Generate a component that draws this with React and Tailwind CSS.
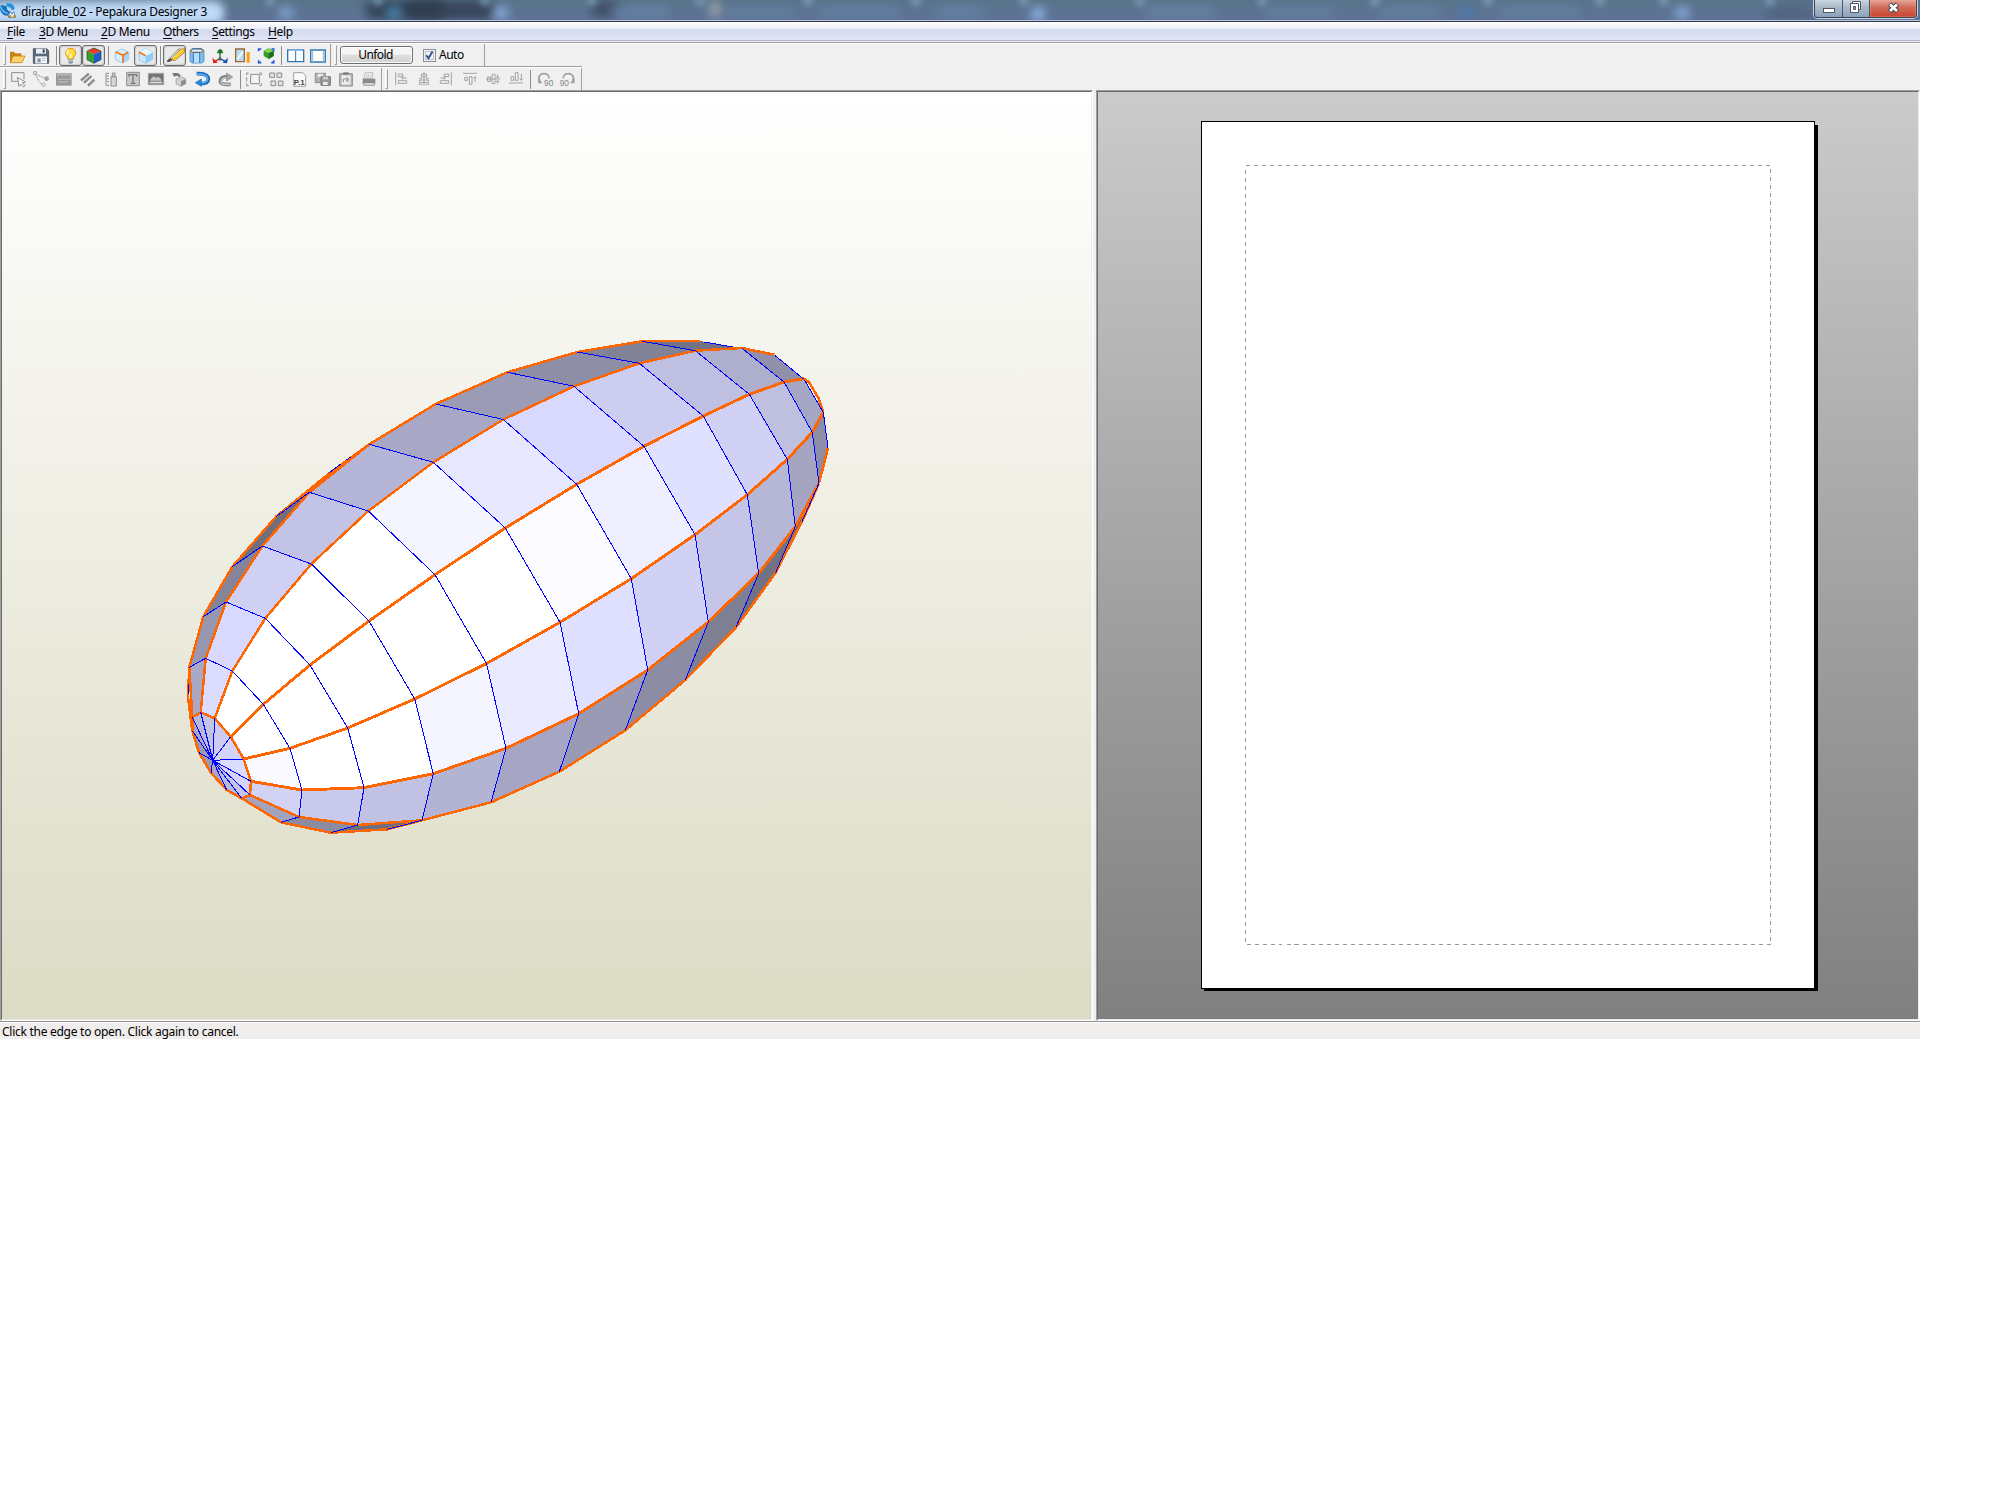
import React from "react";

const O = "#ff6600";
const B = "#0000ff";

/* Meridians of the model, listed from the near tip to the far end. */
const mA = [[192.3,717.3],[189.3,667.3],[203.3,616.7],[232.3,566.7],[276,516.7],[329.3,473.3],[369.3,444.3]];
const mB = [[200.7,712.3],[205.7,658.3],[226,602],[262.3,546],[309.3,492.3],[369.3,444.3],[435.7,404],[507.3,372.3],[577.3,352],[642.3,341.3],[700,341],[741.7,348]];
const mC = [[214.7,718.3],[232.3,671],[265.3,618.3],[311.3,564],[368.3,511],[433.3,462.3],[503.3,419.5],[574,386.3],[639.3,363.3],[695.3,350.7],[741.7,348],[774.3,354.7]];
const mD = [[230.7,736.7],[263.3,704.3],[310,665],[369,621],[435,574.7],[505.3,528],[576.7,484.3],[644,446.3],[703.3,416],[749.3,394.3],[784,382],[804,378.7]];
const mE = [[243.7,759],[290,748.3],[347.7,728],[414.7,699],[486.5,663.5],[560,622.3],[631.3,578.7],[695,534.7],[747.3,494.7],[787.3,459.3],[812.3,432.3],[823.3,412.3]];
const mF = [[251,781.3],[302,790],[364,787.7],[433.3,773.7],[506,748.3],[578.7,713.7],[647.7,670],[708.3,622],[758.7,573.3],[795.3,526.7],[819,483.3],[828,447.7]];
const mG = [[250,795],[299,817],[357.7,825],[422,820.3],[491,802.3],[559.3,771.7],[625.3,730.3],[685.3,680],[736,627.3],[775.3,573.3],[802,521.7],[819,483.3]];
const mH = [[241.7,798.3],[281,822.3],[330.7,832.7],[387.3,829.3],[422,820.3]];

/* Each strip: two meridians, the face fills, and how many cross edges are drawn. */
const strips = [
  [mA, mB, ["#a9a9c7","#9797b1","#84849b","#6f6f80","#6f6f80"], 4],
  [mB, mC, ["#dcdcff","#d9d9ff","#d0d0f5","#c3c3e6","#b5b5d7","#a8a8c6","#9b9bb6","#8e8ea7","#828297","#737388","#737388"], 9],
  [mC, mD, ["#fff","#fff","#fff","#fff","#f5f5ff","#e7e7ff","#d9d9ff","#cdcdf1","#bfbfe1","#aeaecd","#9090aa"], 10],
  [mD, mE, ["#fff","#fff","#fff","#fff","#fff","#fbfbff","#eeeeff","#e0e0ff","#d1d1f5","#bfbfe0","#a5a5c4"], 10],
  [mE, mF, ["#f9f9ff","#fff","#fff","#f5f5ff","#e9e9ff","#dfdfff","#d1d1f5","#c5c5e8","#b6b6d6","#a5a5c2","#8d8da6"], 11],
  [mF, mG, ["#d2d2f5","#c9c9ee","#c1c1e4","#b3b3d3","#a6a6c4","#9a9ab4","#8c8ca5","#7f7f94","#727285","#6c6c7c"], 10],
  [mG, mH, ["#a3a3c0","#8b8ba2","#6f6f80"], 3],
];

const tip = [212.7,760.3];
const ring = [mA[0],mB[0],mC[0],mD[0],mE[0],mF[0],mG[0],mH[0],[226.7,790],[211,772.7],[199,752.7],[192.3,730.7]];
const ringFill = ["#b8b8da","#c3c3e6","#ccccf0","#d4d4fa","#dcdcff","#d4d4fa","#c4c4e6","#b8b8d9","#a8a8c6","#9a9ab5","#9a9ab5","#a8a8c6"];

const P = (a) => a.map((p) => p.join(",")).join(" ");

function Model() {
  return (
    <svg width="700" height="540" viewBox="160 320 700 540" shapeRendering="crispEdges" className="ml-[158px] mt-[228px] block shrink-0">
      {strips.map(([a, b, fills], s) =>
        fills.map((f, i) => (a[i + 1] && b[i + 1] ? <polygon key={s + "-" + i} points={P([a[i], a[i + 1], b[i + 1], b[i]])} fill={f} /> : null)),
      )}
      {ring.map((p, i) => <polygon key={i} points={P([p, ring[(i + 1) % ring.length], tip])} fill={ringFill[i]} />)}
      <g fill="none" stroke={O} strokeWidth="2.5" strokeLinejoin="round">
        {[mA, mB.slice(0, 11), mC, mG, mH].map((m, i) => <polyline key={i} points={P(m)} />)}
        <polyline points={P([...ring, ring[0]])} />
        <polyline points="189.3,667 188,697 192.3,731" />
        <polyline points="804,378.7 809,382 819,399 823.3,412.3" />
        <polyline points="828,447.7 819,483.3" />
      </g>
      <g fill="none" stroke={O} strokeWidth="2.9" strokeLinejoin="round">
        {[mD, mE, mF.slice(0, 11)].map((m, i) => <polyline key={i} points={P(m)} />)}
      </g>
      <g fill="none" stroke={B} strokeWidth="1">
        {strips.map(([a, b, , n], s) =>
          a.slice(1, n + 1).map((p, i) => <polyline key={s + "-" + i} points={P([p, b[i + 1]])} />),
        )}
        {ring.map((p, i) => <polyline key={i} points={P([p, tip])} />)}
        <polyline points="329,473 341,464" />
        <polyline points="346,460 351,457" />
        <polyline points="704,342 733,347" />
        <polyline points="775.3,355.7 803.5,379" />
        <polyline points="804.5,380 823,412" />
        <polyline points="823.5,413 828,448" />
        <polyline points="188,684 188,694" />
      </g>
    </svg>
  );
}

/* One 23px toolbar cell; drawings use a canvas of three units per pixel. */
function Tool({ x, y = 132, on, children }) {
  return (
    <div className={"flex h-[21px] w-[23px] shrink-0 items-center justify-center " + (on ? "rounded-[3px] border border-[#6e6e6e] bg-[#e9e9e9] shadow-[inset_0_0_2px_#999]" : "")}>
      <svg width="23" height="21" viewBox={`${x} ${y} 69 63`} className="block shrink-0">{children}</svg>
    </div>
  );
}
const Sep = () => (
  <div className="flex h-[19px] w-[6px] shrink-0 justify-center"><div className="h-full w-px bg-[#8c8c8c]" /></div>
);
const Grip = () => <div className="h-[20px] w-[3px] shrink-0 border border-l-white border-t-white border-r-[#a0a0a0] border-b-[#a0a0a0] bg-[#f0f0f0]" />;

function RowOne() {
  return (
    <div className="flex h-[22px] w-[485px] items-center border-r border-[#a0a0a0]">
      <div className="ml-[3px] mr-px"><Grip /></div>
      <Tool x={21}>
        <path d="M30 184V152h12l4 5h18v27z" fill="#c98718" />
        <path d="M31 185l8-20h36l-9 20z" fill="#ffd36b" stroke="#b47612" strokeWidth="2" />
      </Tool>
      <Tool x={90}>
        <path d="M100 143h40l6 6v38h-46z" fill="#56687e" stroke="#2f3d4d" strokeWidth="2" />
        <path d="M108 143h30v15h-30z" fill="#e9eef5" /><path d="M128 145h6v10h-6z" fill="#33404f" />
        <path d="M106 166h35v21h-35z" fill="#f4f6fa" /><path d="M112 172h10v12h-10z" fill="#7f90a5" /><path d="M126 172h11M126 178h11" stroke="#9aa" strokeWidth="2" />
      </Tool>
      <Sep />
      <Tool x={177} on>
        <path d="M212 142c-9 0-15 6-15 14 0 7 6 10 7 18h16c1-8 7-11 7-18 0-8-6-14-15-14z" fill="#ffdc3c" stroke="#e0980c" strokeWidth="3" />
        <path d="M206 148c-4 2-5 7-3 12M212 158v14" stroke="#fffce0" strokeWidth="5" fill="none" />
        <path d="M205 175h14v9l-4 4h-6l-4-4z" fill="#8d99aa" /><path d="M205 179h14" stroke="#eee" strokeWidth="2" />
      </Tool>
      <Tool x={246} on>
        <path d="M282 141l21 9-21 10-21-10z" fill="#f03c1e" /><path d="M261 150l21 10v27l-21-11z" fill="#2fa32c" /><path d="M303 150l-21 10v27l21-11z" fill="#1d5bd0" />
        <path d="M261 150l21-9 21 9v26l-21 11-21-11z" fill="none" stroke="#20452c" strokeWidth="2" />
      </Tool>
      <Sep />
      <Tool x={333}>
        <path d="M366 144l20 9v23l-19 10-21-10v-23z" fill="#d9eefd" stroke="#79b9ea" strokeWidth="2" />
        <path d="M367 163l19-10v23l-19 10z" fill="#a3d3f7" />
        <path d="M347 153l22 10 15-9M369 163v22" fill="none" stroke="#ee7417" strokeWidth="5" />
      </Tool>
      <Tool x={402} on>
        <path d="M417 154l20-12 21 12v21l-21 12-20-11z" fill="#cbe8fc" stroke="#71b7ea" strokeWidth="2" />
        <path d="M437 164l21-10v21l-21 12z" fill="#8ecbf5" /><path d="M437 142l21 12-21 10-20-10z" fill="#e7f6ff" />
        <path d="M417 153l20 11" stroke="#f27a15" strokeWidth="5" />
      </Tool>
      <Sep />
      <Tool x={489} on>
        <path d="M501 180l34-36h8l-32 36z" fill="#d9d4c0" stroke="#77735f" strokeWidth="2" />
        <path d="M512 178l30-33 13-2-2 11-27 24z" fill="#fbc926" stroke="#8e6a16" strokeWidth="2" />
        <path d="M520 170l26-24" stroke="#ffe98a" strokeWidth="3" />
        <path d="M500 182l11-11 5 5-8 7z" fill="#4d4d48" />
      </Tool>
      <Tool x={558}>
        <path d="M570 149l6-6h29l7 6v32l-7 5h-29l-6-5z" fill="#80bff0" stroke="#2e75b8" strokeWidth="2" />
        <path d="M571 149l7-5h25l8 5-8 5h-25z" fill="#d9eefd" stroke="#3a4f63" strokeWidth="3" /><path d="M582 156h16v29h-16z" fill="#b8e0fb" /><path d="M599 155v30M580 155v30" stroke="#3a7ab8" strokeWidth="3" /><path d="M570 150l9 5M601 155l10-5" stroke="#f28b1c" strokeWidth="3" />
      </Tool>
      <Tool x={627}>
        <path d="M660 172v-20" stroke="#26702c" strokeWidth="4" /><path d="M650 157l5-9 5-5 6 5 4 9z" fill="#1b752b" />
        <path d="M660 173l-16 8" stroke="#e31d1d" strokeWidth="4" /><path d="M637 170l3 17 14-2z" fill="#e12020" />
        <path d="M660 173l16 8" stroke="#174db8" strokeWidth="4" /><path d="M684 170l-3 17-14-2z" fill="#1c51c0" /><circle cx="660" cy="174" r="5" fill="#58606b" />
      </Tool>
      <Tool x={696}>
        <path d="M707 144h26v38h-26z" fill="#b9dcf2" stroke="#9c6634" strokeWidth="4" /><path d="M711 176l18-24" stroke="#eaf8ff" strokeWidth="6" /><path d="M740 153h9v32h-9z" fill="#ff9d16" />
      </Tool>
      <Tool x={765}>
        <path d="M776 151v-7h8M814 144h7v7M776 178v7h8M814 185h7v-7" fill="none" stroke="#1255e4" strokeWidth="5" />
        <path d="M806 142l15 7v16l-15 9-15-9v-16z" fill="#359b2d" /><path d="M806 142l15 7-15 8-15-8z" fill="#84d253" /><path d="M806 157l15-8v16l-15 9z" fill="#1c6c23" />
      </Tool>
      <Sep />
      <Tool x={852}>
        <path d="M863 147h48v35h-48z" fill="#fdfdfd" stroke="#2e78b6" strokeWidth="4" /><path d="M887 147v35" stroke="#2e78b6" strokeWidth="3" /><path d="M866 148h43" stroke="#95bce0" strokeWidth="4" />
      </Tool>
      <Tool x={921}>
        <path d="M932 147h44v36h-44z" fill="#fffef9" stroke="#2e78b6" strokeWidth="4" /><path d="M937 149v33M971 149v33" stroke="#9ac1e4" strokeWidth="5" />
      </Tool>
      <div className="h-[22px] w-px bg-[#a0a0a0]" />
      <div className="ml-[3px]"><Grip /></div>
      <button className="ml-[3px] flex h-[18px] w-[73px] items-center justify-center rounded-[3px] border border-[#707070] bg-gradient-to-b from-[#f4f4f4] from-45% via-[#dfdfdf] via-50% to-[#d2d2d2] text-[12px] leading-none tracking-[-0.6px] shadow-[inset_0_0_0_1px_#fafafa]">
        <span className="-translate-x-px">Unfold</span>
      </button>
      <div className="ml-[10px] mr-[4px] flex size-[13px] items-center justify-center border border-[#8e8f8f] bg-[#f4f4f4] shadow-[inset_0_0_0_1px_#f4f4f4,inset_0_0_0_2px_#bcc0c8]">
        <svg width="11" height="11" viewBox="0 0 11 11"><path d="M2.3 5.2l2.2 3 4-6.8" fill="none" stroke="#3a4f92" strokeWidth="1.9" /></svg>
      </div>
      <span className="-ml-px text-[12px] leading-none tracking-[-0.5px]">Auto</span>
    </div>
  );
}

const G1 = "#8d8d8d";
const G2 = "#a2a2a2";

function RowTwo() {
  const y = 207;
  return (
    <div className="flex h-[22px] w-[582px] items-center border-r border-[#a0a0a0]">
      <div className="ml-[3px] mr-px"><Grip /></div>
      <Tool x={21} y={y}>
        <path d="M53 244H35v-26h37v20" fill="none" stroke={G1} strokeWidth="3" /><path d="M52 232l24 14-9 2 8 9-5 4-8-9-5 7z" fill="#f8f8f8" stroke={G1} strokeWidth="3" />
      </Tool>
      <Tool x={90} y={y}>
        <path d="M106 220l10 24 12 10M112 224l24 12" fill="none" stroke={G1} strokeWidth="3" strokeDasharray="4 2" /><circle cx="105" cy="219" r="5" fill="#ddd" stroke={G1} strokeWidth="2" /><circle cx="140" cy="236" r="7" fill={G2} /><circle cx="131" cy="254" r="5" fill="#eee" stroke={G1} strokeWidth="2" />
      </Tool>
      <Tool x={159} y={y}>
        <path d="M168 219h47v38h-47z" fill="#999" /><path d="M174 219v10M180 219v6M186 219v10M192 219v6M198 219v10M204 219v6M210 219v10" stroke="#ececec" strokeWidth="2" /><path d="M174 238h38M174 246h30" stroke="#b5b5b5" strokeWidth="4" />
      </Tool>
      <Tool x={228} y={y}>
        <path d="M243 241l23-20M252 248l22-20M264 257l19-18" stroke="#777" strokeWidth="7" /><path d="M244 238l20-17M254 245l18-17M266 254l15-14" stroke="#d0d0d0" strokeWidth="2" />
      </Tool>
      <Tool x={297} y={y}>
        <path d="M327 220h-9v36h9M320 228h7M320 236h7M320 245h7" fill="none" stroke={G1} strokeWidth="3" /><path d="M333 230h16v28h-16zM337 219h8v11h-8z" fill="#d6d6d6" stroke={G1} strokeWidth="3" />
      </Tool>
      <Tool x={366} y={y}>
        <path d="M380 217h38v40h-38z" fill="#c9c9c9" stroke={G1} strokeWidth="3" /><path d="M387 230v-6h23v6M399 225v25M392 250h14" stroke="#777" strokeWidth="4" fill="none" />
      </Tool>
      <Tool x={435} y={y}>
        <path d="M445 220h46v34h-46z" fill="#737373" stroke={G2} strokeWidth="3" /><path d="M449 245h38v5h-38z" fill="#ddd" /><path d="M450 242c7-14 12-15 18-8 6-6 12-3 17 8z" fill="#c3c3c3" />
      </Tool>
      <Tool x={504} y={y}>
        <path d="M517 219h17l8 7-4 6-7-5-9 3z" fill="#777" /><path d="M528 237l15-7 14 7v14l-14 8-15-8z" fill="#d0d0d0" stroke={G1} strokeWidth="2" /><path d="M543 244l14-7v14l-14 8z" fill={G1} />
      </Tool>
      <Tool x={573} y={y}>
        <path d="M590 221c24-1 35 5 35 16 0 10-9 14-22 14" fill="none" stroke="#1769bd" strokeWidth="11" /><path d="M590 222c23-1 33 5 33 15 0 8-9 12-21 12" fill="none" stroke="#5ab1f3" strokeWidth="5" /><path d="M604 237v22l-18-11z" fill="#2787dc" stroke="#1769bd" strokeWidth="2" />
      </Tool>
      <Tool x={642} y={y}>
        <path d="M692 253h-17c-12 0-16-7-13-14 3-8 13-9 22-9" fill="none" stroke="#858585" strokeWidth="11" /><path d="M690 253h-16c-9 0-12-6-9-12 3-7 10-8 19-8" fill="none" stroke="#c3c3c3" strokeWidth="5" /><path d="M680 219v24l18-12z" fill="#a8a8a8" stroke="#858585" strokeWidth="2" />
      </Tool>
      <Sep />
      <Tool x={729} y={y}>
        <path d="M746 219h-6v7M740 250v7h6M778 219h6v7M784 250v7h-6M740 232v12" fill="none" stroke={G1} strokeWidth="3" /><path d="M752 223h26v28h-26z" fill="#f3f3f3" stroke={G1} strokeWidth="3" />
      </Tool>
      <Tool x={798} y={y}>
        <path d="M809 219h15v13h-15zM831 219h14v13h-14zM813 243h14v14h-14zM835 243h14v14h-14z" fill="#e3e3e3" stroke={G1} strokeWidth="3" />
      </Tool>
      <Tool x={867} y={y}>
        <path d="M881 218h27l9 8v33h-36z" fill="#fafafa" stroke={G2} strokeWidth="3" /><text x="881" y="254" fontSize="24" fontWeight="bold" fill="#454545" fontFamily="Liberation Sans, sans-serif">P.1</text>
      </Tool>
      <Tool x={936} y={y}>
        <path d="M946 220h30v28h-30z" fill="#b3b3b3" stroke="#888" strokeWidth="3" /><path d="M953 221h16v10h-16z" fill="#e9e9e9" /><path d="M963 230h28v26h-28z" fill="#999" stroke="#777" strokeWidth="3" /><path d="M969 246h14v9h-14z" fill="#e9e9e9" /><path d="M968 230h16v8h-16z" fill="#ccc" />
      </Tool>
      <Tool x={1005} y={y}>
        <path d="M1019 221h38v37h-38z" fill="#bbb" stroke={G1} strokeWidth="3" /><path d="M1025 226h26v28h-26z" fill="#eee" /><path d="M1030 217h16v7h-16z" fill="#777" /><path d="M1030 247v-10h14v10M1039 231l7 6-8 6" fill="none" stroke={G1} strokeWidth="3" />
      </Tool>
      <Tool x={1074} y={y}>
        <path d="M1095 218h24l-3 18h-24z" fill="#f7f7f7" stroke={G2} strokeWidth="2" /><path d="M1088 236h38v15h-38z" fill="#8a8a8a" /><path d="M1091 248h32v8h-32z" fill="#ddd" stroke="#777" strokeWidth="2" /><path d="M1098 225h17M1097 231h17" stroke="#aaa" strokeWidth="2" />
      </Tool>
      <div className="h-[22px] w-px bg-[#a0a0a0]" />
      <div className="ml-[3px] mr-px"><Grip /></div>
      <Tool x={1167} y={y}><g fill="none" stroke={G2} strokeWidth="3"><path d="M1187 217v39M1195 222h13v8h-13zM1195 242h25v8h-25zM1220 234h-14M1210 230l-5 4 5 4" /></g></Tool>
      <Tool x={1236} y={y}><g fill="none" stroke={G2} strokeWidth="3"><path d="M1272 216v41M1264 222h16v8h-16zM1259 240h26v8h-26zM1257 235h10M1277 235h10M1256 253h11M1277 253h11" /></g></Tool>
      <Tool x={1305} y={y}><g fill="none" stroke={G2} strokeWidth="3"><path d="M1354 217v39M1333 222h13v8h-13zM1321 242h25v8h-25zM1321 234h14M1331 230l5 4-5 4" /></g></Tool>
      <Tool x={1374} y={y}><g fill="none" stroke={G2} strokeWidth="3"><path d="M1389 220h42M1394 232h8v9h-8zM1408 230h8v23h-8zM1425 246v-16M1420 235l5-5 5 5" /></g></Tool>
      <Tool x={1443} y={y}><g fill="none" stroke={G2} strokeWidth="3"><path d="M1458 237h42M1463 231h9v13h-9zM1476 223h9v27h-9zM1493 223v10M1493 251v-10M1488 229l5 5 5-5M1488 246l5-5 5 5" /></g></Tool>
      <Tool x={1512} y={y}><g fill="none" stroke={G2} strokeWidth="3"><path d="M1527 249h42M1533 230h8v11h-8zM1546 218h8v23h-8zM1564 221v20M1559 236l5 5 5-5" /></g></Tool>
      <Sep />
      <Tool x={1599} y={y}><path d="M1620 243c-9-13 2-24 14-22 9 1 14 7 13 14" fill="none" stroke={G2} strokeWidth="5" /><path d="M1614 234v16h14z" fill={G2} /><text x="1632" y="257" fontSize="25" fill="#858585" fontFamily="Liberation Sans, sans-serif">90</text></Tool>
      <Tool x={1668} y={y}><path d="M1717 243c9-13-2-24-14-22-9 1-14 7-13 14" fill="none" stroke={G2} strokeWidth="5" /><path d="M1724 234v16h-14z" fill={G2} /><text x="1679" y="257" fontSize="25" fill="#858585" fontFamily="Liberation Sans, sans-serif">90</text></Tool>
    </div>
  );
}

const blobs = [
  [405, 80, "#2b3a4c", 20, 0.8], [450, 90, "#303c4e", 20, 0.8], [605, 30, "#3b4a60", 18, 0.8], [286, 16, "#84a9d6", 14, 0.8], [394, 16, "#4b86b0", 14, 0.9], [501, 16, "#88abdc", 14, 0.9],
  [715, 12, "#a7afb0", 18, 0.7], [1038, 14, "#8eb4ea", 16, 0.9], [1466, 12, "#4a7bb4", 14, 0.8], [1682, 16, "#86a9d8", 14, 0.9], [1790, 50, "#4e607d", 16, 0.7],
  [640, 60, "#6785a8", 12, 0.7], [760, 70, "#6685a5", 12, 0.6], [860, 80, "#6683a8", 12, 0.7], [960, 50, "#6887aa", 12, 0.6], [1180, 70, "#6985a8", 12, 0.7], [1300, 70, "#6783a5", 12, 0.6], [1410, 60, "#6783a5", 12, 0.7], [1540, 80, "#6783a5", 12, 0.7],
];

function TitleBar() {
  return (
    <header className="relative flex h-[22px] shrink-0 items-start overflow-hidden border-b border-[#32384b] bg-gradient-to-b from-[#587489] to-[#5f7299] shadow-[inset_0_-1px_0_#b9c6dc]">
      <div className="absolute inset-x-0 top-0 h-[20px] overflow-hidden">
        {blobs.map(([x, w, c, h, o], i) => (
          <div key={i} className="absolute rounded-full blur-[5px]" style={{ left: x - w / 2, top: h > 17 ? 0 : 6, width: w, height: h, background: c, opacity: o }} />
        ))}
        {[270, 378, 485, 592, 700, 808, 916, 1024, 1140, 1262, 1375, 1488, 1600, 1664, 1770].map((x) => (
          <div key={x} className="absolute -top-[4px] h-[10px] w-[10px] rounded-full bg-[#83aac2] opacity-70 blur-[3px]" style={{ left: x - 5 }} />
        ))}
        <div className="absolute -left-[10px] top-px h-[24px] w-[234px] rounded-[9px] bg-[#bfd9f7] blur-[4px]" />
      </div>
      <svg className="relative mt-[2px] shrink-0" width="17" height="18" viewBox="0 0 51 54">
        <path d="M3 9l17 3c-1 9 3 16 12 17l-9 12C11 42 0 31 0 17z" fill="#1273c5" /><path d="M18 5c14-4 26 4 26 16l-9 4c-1-7-5-10-12-10z" fill="#288fda" /><path d="M2 14c3 10 9 18 21 20" stroke="#7fc7f6" strokeWidth="4" fill="none" />
        <path d="M25 46l4-18 7 9 5-8 5 17z" fill="#f3f7fb" stroke="#27598c" strokeWidth="2" /><path d="M26 40h8v7h-8zM40 40h8v7h-8z" fill="#b08a2c" />
      </svg>
      <h1 className="relative ml-[4px] mt-[3px] whitespace-nowrap text-[12px] leading-[17px] tracking-[-0.3px] text-black">dirajuble_02 - Pepakura Designer 3</h1>
      <div className="relative ml-auto mr-[3px] flex h-[18px] w-[103px] overflow-hidden rounded-b-[4px] border border-t-0 border-[#3a4353] shadow-[0_0_0_1px_#c6d6e6]">
        <div className="flex w-[28px] items-center justify-center border-r border-[#48566b] bg-gradient-to-b from-[#ccd6df] via-[#a9b8c7] via-45% to-[#8ba1bb]">
          <div className="mt-[4px] h-[5px] w-[12px] border border-[#505565] bg-white" />
        </div>
        <div className="flex w-[27px] items-center justify-center border-r border-[#48566b] bg-gradient-to-b from-[#ccd6df] via-[#a9b8c7] via-45% to-[#8ba1bb]">
          <svg width="13" height="13" viewBox="0 0 13 13" className="-translate-x-px -translate-y-px"><path d="M3.5.5h8v8h-8z" fill="#fff" stroke="#505565" /><path d="M1.5 2.500h8v9h-8z" fill="#fff" stroke="#505565" /><path d="M4.500 5.500h2v3h-2z" fill="#9ab" stroke="#505565" /></svg>
        </div>
        <div className="flex flex-1 items-center justify-center bg-gradient-to-b from-[#e4a295] from-0% via-[#cf6a58] via-45% to-[#c9402b] shadow-[inset_0_0_2px_#f6b6a2]">
          <svg width="13" height="12" viewBox="0 0 13 12" className="-translate-y-px"><path d="M2.5 2l8 7.5M10.500 2l-8 7.500" stroke="#514757" strokeWidth="5" /><path d="M3 2.500l7 6.500M10 2.500l-7 6.500" stroke="#fff" strokeWidth="2.700" /></svg>
        </div>
      </div>
    </header>
  );
}

const menus = [
  ["F", "ile", "w-[32px]", "tracking-[-0.3px]"],
  ["3", "D Menu", "w-[62px]", "tracking-[-0.35px]"],
  ["2", "D Menu", "w-[62px]", "tracking-[-0.35px]"],
  ["O", "thers", "w-[49px]", "tracking-[-0.5px]"],
  ["S", "ettings", "w-[56px]", "tracking-[-0.4px]"],
  ["H", "elp", "w-[30px]", "tracking-[-0.3px]"],
];

export default function App() {
  return (
    <div className="h-[1500px] w-[2000px] overflow-hidden bg-white text-black [font-family:'Noto_Sans','Open_Sans',sans-serif]">
      <div className="flex h-[1039px] w-[1920px] flex-col bg-[#f0f0f0]">
        <TitleBar />
        <nav className="flex h-[22px] shrink-0 flex-col border-b border-white">
          <div className="flex h-[18px] items-center bg-[linear-gradient(#ffffff_0,#e9edf6_7px,#d3daed_7px,#e1e5f6_18px)] pl-[7px]">
            {menus.map(([a, b, w, t]) => (
              <div key={a} className={"whitespace-nowrap pt-px text-[12px] leading-[17px] " + w + " " + t}>
                <span className="underline underline-offset-2">{a}</span>{b}
              </div>
            ))}
          </div>
          <div className="h-px bg-[#b0b8ce]" /><div className="h-px bg-[#f0f0f5]" /><div className="h-px bg-[#9c9c9c]" />
        </nav>
        <div className="flex h-[46px] shrink-0 flex-col">
          <RowOne />
          <div className="h-px w-[582px] bg-[#a0a0a0]" /><div className="h-px w-[582px] bg-white" />
          <RowTwo />
        </div>
        <main className="flex h-[931px] shrink-0 gap-[3px]">
          <section className="h-full w-[1093px] shrink-0 overflow-hidden border border-l-[#a0a0a0] border-t-[#a0a0a0] border-r-white border-b-white">
            <div className="h-full border border-l-[#696969] border-t-[#696969] border-r-[#eeeeee] border-b-[#e8e8e0] bg-gradient-to-b from-white to-[#dcdbc5]">
              <Model />
            </div>
          </section>
          <section className="h-full w-[824px] shrink-0 border border-l-[#a0a0a0] border-t-[#a0a0a0] border-r-white border-b-white">
            <div className="h-full border border-l-[#696969] border-t-[#696969] border-r-[#eeeeee] border-b-[#e8e8e8] bg-gradient-to-b from-[#cbcbcb] to-[#808080] pl-[103px] pt-[29px]">
              <div className="relative h-[868px] w-[614px]">
                <div className="absolute -bottom-[2px] -right-[3px] left-[3px] top-[4px] bg-black" />
                <div className="relative h-full border border-black bg-white pl-[43px] pt-[43px]">
                  <svg width="526" height="780" shapeRendering="crispEdges"><rect x=".5" y=".5" width="525" height="779" fill="none" stroke="#999999" strokeDasharray="4 4" /></svg>
                </div>
              </div>
            </div>
          </section>
        </main>
        <footer className="flex h-[18px] shrink-0 items-center border-t border-[#8e8e8e] bg-[#f0eded] pl-[2px] text-[12px] leading-[16px] tracking-[-0.27px] shadow-[inset_0_1px_0_#fff]">
          <span className="whitespace-nowrap pt-[3px]">Click the edge to open. Click again to cancel.</span>
        </footer>
      </div>
    </div>
  );
}
